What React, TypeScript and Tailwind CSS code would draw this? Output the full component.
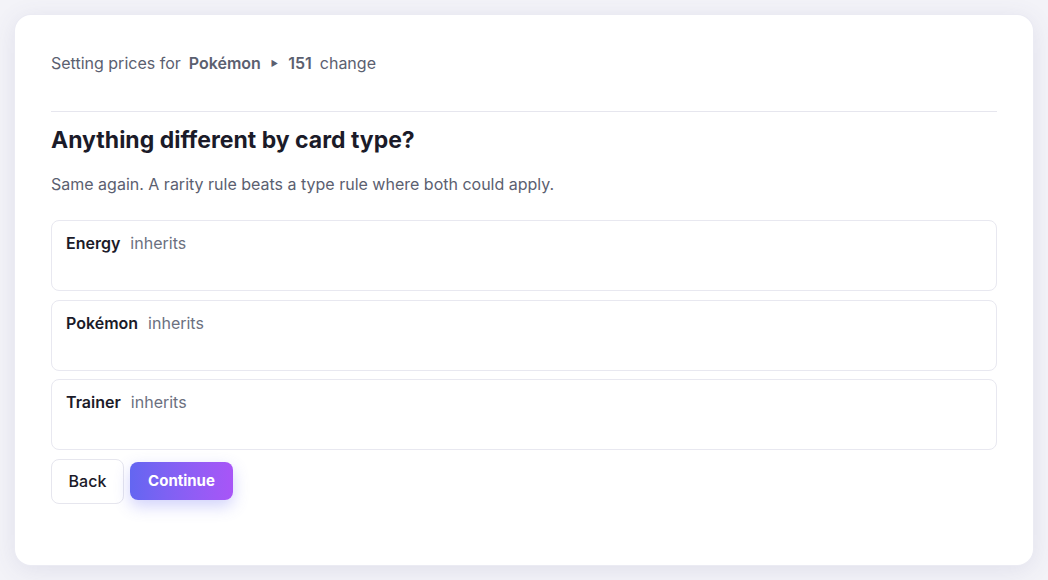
import React from "react";

const rows = ["Energy", "Pokémon", "Trainer"];

export default function App() {
  return (
    <div
      className="min-h-screen bg-[#f3f3f8] p-[15px]"
      style={{ fontFamily: "Inter, 'Noto Sans', sans-serif" }}
    >
      <div className="h-[550px] rounded-2xl bg-white px-9 pt-9 shadow-[0_4px_24px_rgba(80,80,140,0.12)] ring-1 ring-[#ebebf3]">
        {/* breadcrumb */}
        <div className="flex items-center border-b border-[#e6e6ee] pb-9 text-[16px] leading-6 text-[#5b6070]">
          <span>Setting prices for</span>
          <span className="ml-[8px] font-semibold">Pokémon</span>
          <span className="mx-[10px] text-[8px] text-[#5b6070]">▶</span>
          <span className="font-semibold">151</span>
          <span className="ml-[8px]">change</span>
        </div>

        <h1 className="mt-[14px] text-[23px] font-bold leading-7 text-[#1b1b29]">
          Anything different by card type?
        </h1>
        <p className="mt-[18px] text-[16px] leading-6 text-[#5b6070]">
          Same again. A rarity rule beats a type rule where both could apply.
        </p>

        <div className="mt-6 flex flex-col gap-[8.5px]">
          {rows.map((r) => (
            <div
              key={r}
              className="h-[71px] rounded-lg border border-[#e8e8f0] px-[14px] py-[10px] text-[16px] leading-6"
            >
              <span className="font-semibold text-[#1b1b29]">{r}</span>
              <span className="ml-[10px] text-[#6b7080]">inherits</span>
            </div>
          ))}
        </div>

        <div className="mt-[8.5px] flex items-center gap-[6px]">
          <button className="h-[45px] w-[73px] rounded-lg border border-[#e6e6ee] bg-white text-[16px] font-medium text-[#1b1b29]">
            Back
          </button>
          <button className="h-[38px] w-[103px] rounded-lg bg-gradient-to-r from-[#6366f1] to-[#a855f7] text-[15px] font-bold text-white shadow-[0_6px_16px_rgba(99,102,241,0.3)]">
            Continue
          </button>
        </div>
      </div>
    </div>
  );
}
